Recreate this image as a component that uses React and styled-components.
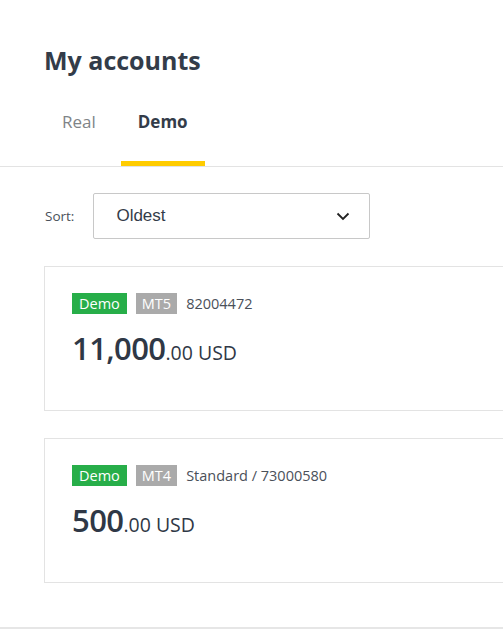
import styled, { createGlobalStyle } from "styled-components";

const GlobalStyle = createGlobalStyle`
  html, body {
    margin: 0;
    padding: 0;
    background: #fff;
    overflow: hidden;
  }
  body {
    font-family: "Open Sans", "Noto Sans", sans-serif;
    color: #333c49;
  }
`;

const Page = styled.div`
  width: 503px;
  height: 629px;
  overflow: hidden;
  display: flex;
  flex-direction: column;
  border-bottom: 2px solid #e6e6e6;
  box-sizing: border-box;
`;

const Header = styled.div`
  padding: 44px 0 0 44px;
`;

const Title = styled.h1`
  margin: 0;
  font-size: 25px;
  line-height: 32px;
  font-weight: 700;
  color: #333c49;
`;

const Tabs = styled.div`
  display: flex;
  margin-top: 22px;
  padding-left: 45px;
  border-bottom: 1px solid #e3e3e3;
`;

const Tab = styled.div`
  padding: 12px 17px 0;
  height: 51px;
  font-size: 17px;
  line-height: 24px;
  font-weight: ${(p) => (p.$active ? 700 : 400)};
  color: ${(p) => (p.$active ? "#333c49" : "#808487")};
  border-bottom: 5px solid ${(p) => (p.$active ? "#ffcc00" : "transparent")};
  margin-left: ${(p) => (p.$first ? "0" : "8px")};
`;

const Body = styled.div`
  padding: 26px 0 0 44px;
  display: flex;
  flex-direction: column;
`;

const SortRow = styled.div`
  display: flex;
  align-items: center;
  gap: 19px;
  margin-left: 1px;
`;

const SortLabel = styled.span`
  font-size: 13.5px;
  color: #4a5059;
`;

const Select = styled.div`
  width: 277px;
  height: 46px;
  box-sizing: border-box;
  border: 1px solid #c8c8c8;
  border-radius: 2px;
  display: flex;
  align-items: center;
  justify-content: space-between;
  padding: 0 19px 0 22px;
  font-family: "Liberation Sans", Arial, sans-serif;
  font-size: 17px;
  color: #333c49;
`;

const CardList = styled.div`
  margin-top: 27px;
  display: flex;
  flex-direction: column;
  gap: 27px;
`;

const Card = styled.div`
  width: 600px;
  height: 145px;
  box-sizing: border-box;
  border: 1px solid #e3e3e3;
  padding: 26px 0 0 27px;
`;

const BadgeRow = styled.div`
  display: flex;
  align-items: center;
  gap: 9px;
`;

const Badge = styled.span`
  display: inline-block;
  height: 21px;
  line-height: 21px;
  padding: 0 ${(p) => p.$pad || 7}px;
  font-size: 14.5px;
  color: #fff;
  background: ${(p) => p.$bg};
`;

const AccountId = styled.span`
  font-size: 14.5px;
  color: #4a5059;
`;

const Amount = styled.div`
  margin-top: 14px;
  color: #2f3846;
  font-size: 31px;
  line-height: 40px;
  font-weight: 600;
  letter-spacing: -0.6px;
  small {
    font-size: 19.5px;
    font-weight: 400;
    letter-spacing: 0;
  }
`;

const accounts = [
  { platform: "MT5", label: "82004472", whole: "11,000" },
  { platform: "MT4", label: "Standard / 73000580", whole: "500" },
];

export default function App() {
  return (
    <>
      <GlobalStyle />
      <Page>
        <Header>
          <Title>My accounts</Title>
        </Header>
        <Tabs>
          <Tab $first>Real</Tab>
          <Tab $active>Demo</Tab>
        </Tabs>
        <Body>
          <SortRow>
            <SortLabel>Sort:</SortLabel>
            <Select>
              <span>Oldest</span>
              <svg width="14" height="9" viewBox="0 0 14 9" fill="none">
                <path d="M1.5 1.5L7 7l5.5-5.5" stroke="#222" strokeWidth="1.8" />
              </svg>
            </Select>
          </SortRow>
          <CardList>
            {accounts.map((a) => (
              <Card key={a.label}>
                <BadgeRow>
                  <Badge $bg="#27ae49">Demo</Badge>
                  <Badge $bg="#aaaaaa" $pad={6}>{a.platform}</Badge>
                  <AccountId>{a.label}</AccountId>
                </BadgeRow>
                <Amount>
                  {a.whole}
                  <small>.00 USD</small>
                </Amount>
              </Card>
            ))}
          </CardList>
        </Body>
      </Page>
    </>
  );
}
